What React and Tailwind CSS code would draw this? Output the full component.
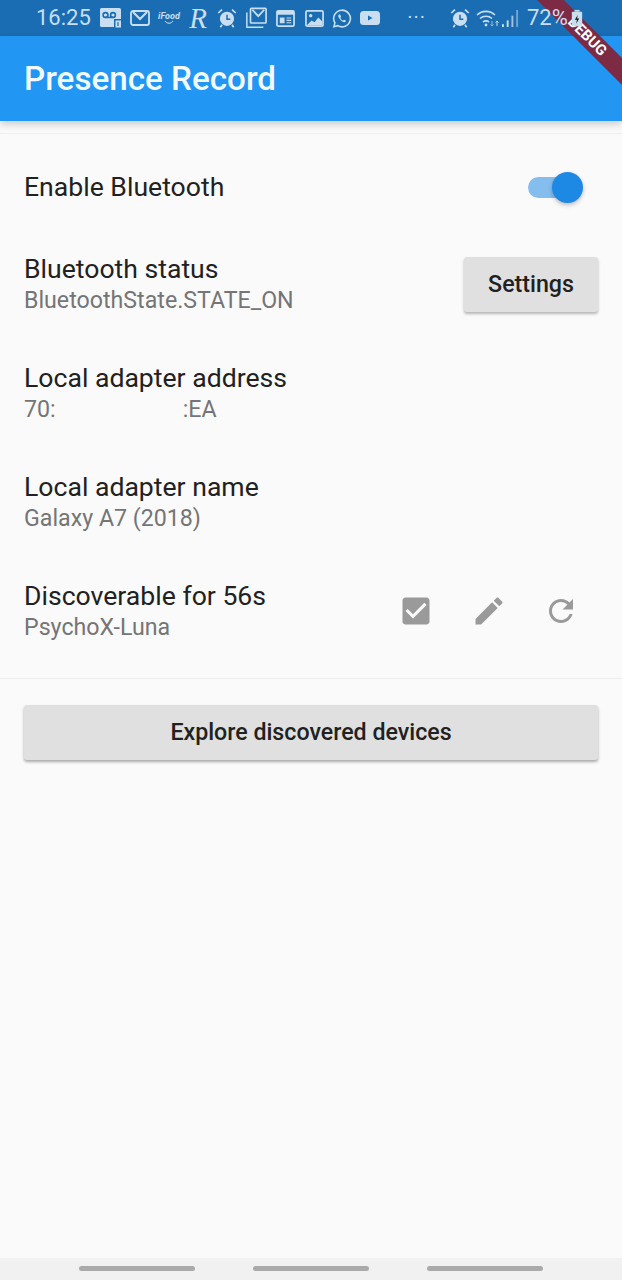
import React from "react";

const Mi = ({ d, className }) => (
    <svg viewBox="0 0 24 24" className={className} fill="currentColor">
        <path d={d} />
    </svg>
);

const Voicemail = () => (
    <svg viewBox="0 0 22 22" className="w-[22px] h-[22px]">
        <rect x="0" y="1" width="21" height="19" rx="1.5" fill="#c9dff1" />
        <circle cx="5.5" cy="8" r="2.4" fill="none" stroke="#1a6db3" strokeWidth="1.6" />
        <circle cx="13" cy="8" r="2.4" fill="none" stroke="#1a6db3" strokeWidth="1.6" />
        <path d="M5.5 10.4h7.5" stroke="#1a6db3" strokeWidth="1.6" />
        <rect x="14" y="12" width="8" height="9" fill="#1a6db3" />
        <rect x="15.5" y="13.5" width="5.5" height="7" fill="#c9dff1" />
        <path d="M18 15v4" stroke="#1a6db3" strokeWidth="1.2" />
    </svg>
);

const Mail = () => (
    <svg viewBox="0 0 20 18" className="w-[20px] h-[18px]">
        <rect x="1" y="2" width="18" height="14" rx="2" fill="none" stroke="#c9dff1" strokeWidth="1.8" />
        <path d="M3 3l7 7 7-7" fill="none" stroke="#c9dff1" strokeWidth="2" />
    </svg>
);

const Alarm = () => (
    <svg viewBox="0 0 24 24" className="w-[20px] h-[20px]">
        <circle cx="12" cy="13" r="8.5" fill="#c9dff1" />
        <path d="M12 8v5.5h4" fill="none" stroke="#1a6db3" strokeWidth="1.8" />
        <path d="M1.5 6L6 2M22.5 6L18 2M6 20l-2 3M18 20l2 3" stroke="#c9dff1" strokeWidth="2" />
    </svg>
);

const MailStack = () => (
    <svg viewBox="0 0 24 24" className="w-[22px] h-[22px]">
        <path d="M2 6v16h18" fill="none" stroke="#c9dff1" strokeWidth="1.6" />
        <rect x="6" y="1.5" width="17" height="16" rx="1" fill="none" stroke="#c9dff1" strokeWidth="1.8" />
        <path d="M8 3l6.5 7L21 3" fill="none" stroke="#c9dff1" strokeWidth="2" />
    </svg>
);

const Calendar = () => (
    <svg viewBox="0 0 20 20" className="w-[19px] h-[19px]">
        <rect x="1" y="2" width="18" height="16" rx="1.5" fill="none" stroke="#c9dff1" strokeWidth="1.8" />
        <rect x="1" y="2" width="18" height="4" fill="#c9dff1" />
        <rect x="4" y="9" width="5" height="6" fill="#c9dff1" />
        <path d="M11 9.5h5M11 12h5M11 14.5h5" stroke="#c9dff1" strokeWidth="1.2" />
    </svg>
);

const ImageIcon = () => (
    <svg viewBox="0 0 20 20" className="w-[19px] h-[19px]">
        <rect x="1" y="2" width="18" height="16" rx="1.5" fill="none" stroke="#c9dff1" strokeWidth="1.8" />
        <circle cx="6" cy="7" r="1.8" fill="#c9dff1" />
        <path d="M2 17l5-5 3 2 4-5 4 4v4z" fill="#c9dff1" />
    </svg>
);

const Whatsapp = () => (
    <svg viewBox="0 0 24 24" className="w-[21px] h-[21px]">
        <path d="M12 2a10 10 0 0 0-8.5 15.2L2.3 21.8l4.7-1.2A10 10 0 1 0 12 2z" fill="none" stroke="#c9dff1" strokeWidth="1.9" />
        <path d="M8.2 7.2c-1 1-1 2.6.6 4.9 1.6 2.3 3.6 3.9 5.6 4.3 1.3.2 2.3-.7 2.5-1.7l-2.4-1.3-1.1 1c-1.4-.5-2.8-2-3.4-3.4l.9-1.1-1.1-2.6z" fill="#c9dff1" />
    </svg>
);

const Youtube = () => (
    <svg viewBox="0 0 20 14" className="w-[20px] h-[14px]">
        <rect width="20" height="14" rx="3.5" fill="#c9dff1" />
        <path d="M8 4.5l4.5 2.5L8 9.5z" fill="#1a6db3" />
    </svg>
);

const Wifi = () => (
    <svg viewBox="0 0 24 20" className="w-[24px] h-[20px]">
        <path d="M1 7a13 13 0 0 1 18 0M4 10.5a9 9 0 0 1 12 0M7 14a5 5 0 0 1 6 0" fill="none" stroke="#c9dff1" strokeWidth="1.6" />
        <circle cx="10" cy="17" r="1.4" fill="#c9dff1" />
        <path d="M16 13v5M14.5 16.5l1.5 1.5 1.5-1.5" fill="none" stroke="#8fbce0" strokeWidth="1" />
        <path d="M21 18v-5M19.5 14.5L21 13l1.5 1.5" fill="none" stroke="#c9dff1" strokeWidth="1" />
    </svg>
);

const Signal = () => (
    <svg viewBox="0 0 18 20" className="w-[17px] h-[19px]">
        <rect x="0" y="16" width="2" height="3" fill="#c9dff1" />
        <rect x="5" y="12" width="2" height="7" fill="#c9dff1" />
        <rect x="10" y="7" width="2" height="12" fill="#c9dff1" opacity="0.75" />
        <rect x="15" y="1" width="2" height="18" fill="#c9dff1" opacity="0.5" />
    </svg>
);

const Battery = () => (
    <svg viewBox="0 0 14 20" className="w-[12px] h-[19px]">
        <rect x="4" y="0" width="6" height="2" fill="#c9dff1" />
        <rect x="1" y="2" width="12" height="17" rx="1" fill="#c9dff1" />
        <path d="M8 6L4.5 11.5H7L6 16l3.5-6H7z" fill="#111" />
    </svg>
);

const StatusBar = () => (
    <div className="h-[36px] bg-[#1a6db3] shrink-0">
        {/* icons sit above the debug ribbon */}
        <div className="relative z-30 h-full flex items-center pl-[36px] text-[#c9dff1]">
            <span className="text-[22px] w-[64px] leading-none">16:25</span>
            <div className="w-[22px] flex justify-center"><Voicemail /></div>
            <div className="w-[36px] flex justify-center"><Mail /></div>
            <div className="w-[22px] flex flex-col items-center">
                <span className="text-[9px] font-bold italic leading-none">iFood</span>
                <svg viewBox="0 0 10 3" className="w-[10px] h-[3px]">
                    <path d="M1 0c2 3 6 3 8 0" fill="none" stroke="#c9dff1" strokeWidth="1" />
                </svg>
            </div>
            <div className="w-[36px] flex justify-center">
                <span className="text-[29px] italic leading-none font-['Liberation_Serif',serif]">R</span>
            </div>
            <div className="w-[22px] flex justify-center"><Alarm /></div>
            <div className="w-[36px] flex justify-center"><MailStack /></div>
            <div className="w-[22px] flex justify-center"><Calendar /></div>
            <div className="w-[36px] flex justify-center"><ImageIcon /></div>
            <div className="w-[20px] flex justify-center"><Whatsapp /></div>
            <div className="w-[36px] flex justify-center"><Youtube /></div>
            <div className="w-[38px] flex justify-end text-[20px] leading-none tracking-[1px] -mt-[2px]">···</div>
            <div className="w-[44px] flex justify-end"><Alarm /></div>
            <div className="ml-[6px] flex items-center"><Wifi /></div>
            <div className="ml-[2px] flex items-center"><Signal /></div>
            <span className="text-[22px] leading-none ml-[8px] whitespace-nowrap">72%</span>
            <div className="ml-[3px] flex items-center"><Battery /></div>
        </div>
    </div>
);

const InfoRow = ({ title, sub, children }) => (
    <div className="h-[109px] flex items-center pl-[24px] pr-[24px]">
        <div className="flex-1 -mt-[2px]">
            <div className="text-[26.6px] leading-[32px] text-[#212121]">{title}</div>
            <div className="text-[23.2px] leading-[30px] text-[#757575]">{sub}</div>
        </div>
        {children}
    </div>
);

export default function App() {
    return (
        <div className="relative w-[622px] h-[1280px] overflow-hidden bg-[#fafafa] flex flex-col font-['Roboto',sans-serif]">
            <StatusBar />

            {/* App bar */}
            <div className="h-[85px] bg-[#2196f3] flex items-center px-[24px] shadow-[0_3px_8px_rgba(0,0,0,0.2)] shrink-0 z-10">
                <h1 className="text-[33.2px] font-medium text-[#f2fbff] leading-none">Presence Record</h1>
            </div>

            <div className="mt-[12px] h-px bg-[#eeeeee]" />

            {/* Enable */}
            <div className="mt-[10px] h-[86px] flex items-center justify-between pl-[24px] pr-[44px]">
                <span className="text-[26.6px] text-[#212121]">Enable Bluetooth</span>
                <div className="relative w-[50px] h-[21px] rounded-full bg-[#86bdef]">
                    <div className="absolute right-[-5px] top-[-5px] w-[31px] h-[31px] rounded-full bg-[#1e88e5] shadow-[0_2px_4px_rgba(0,0,0,0.25)]" />
                </div>
            </div>

            <InfoRow title="Bluetooth status" sub="BluetoothState.STATE_ON">
                <button className="w-[134px] h-[55px] rounded-[3px] bg-[#e0e0e0] text-[23.2px] font-medium text-[#212121] shadow-[0_2px_3px_rgba(0,0,0,0.28)] -mt-[1px]">
                    Settings
                </button>
            </InfoRow>

            <InfoRow
                title="Local adapter address"
                sub={
                    <span className="flex">
                        <span>70:</span>
                        <span className="w-[127px]" />
                        <span>:EA</span>
                    </span>
                }
            />

            <InfoRow title="Local adapter name" sub="Galaxy A7 (2018)" />

            <InfoRow title="Discoverable for 56s" sub="PsychoX-Luna">
                <div className="flex items-center text-[#9a9a9a] mr-[19px] gap-[36.5px] -mt-[2px]">
                    <Mi
                        className="w-[36px] h-[36px]"
                        d="M19 3H5c-1.11 0-2 .9-2 2v14c0 1.1.89 2 2 2h14c1.11 0 2-.9 2-2V5c0-1.1-.89-2-2-2zm-9 14l-5-5 1.41-1.41L10 14.17l7.59-7.59L19 8l-9 9z"
                    />
                    <Mi
                        className="w-[36px] h-[36px]"
                        d="M3 17.25V21h3.75L17.81 9.94l-3.75-3.75L3 17.25zM20.71 7.04c.39-.39.39-1.02 0-1.41l-2.34-2.34c-.39-.39-1.02-.39-1.41 0l-1.83 1.83 3.75 3.75 1.83-1.83z"
                    />
                    <Mi
                        className="w-[36px] h-[36px]"
                        d="M17.65 6.35C16.2 4.9 14.21 4 12 4c-4.42 0-7.99 3.58-7.99 8s3.57 8 7.99 8c3.73 0 6.84-2.55 7.73-6h-2.08c-.82 2.33-3.04 4-5.65 4-3.31 0-6-2.69-6-6s2.69-6 6-6c1.66 0 3.14.69 4.22 1.78L13 11h7V4l-2.35 2.35z"
                    />
                </div>
            </InfoRow>

            <div className="mt-[12px] h-px bg-[#eeeeee]" />

            <div className="px-[24px] mt-[26px]">
                <button className="w-full h-[55px] rounded-[3px] bg-[#e0e0e0] text-[23.2px] font-medium text-[#212121] shadow-[0_2px_3px_rgba(0,0,0,0.32)]">
                    Explore discovered devices
                </button>
            </div>

            <div className="flex-1" />

            {/* Nav bar */}
            <div className="h-[22px] bg-[#f1f1f1] flex items-start justify-center gap-[58px] pt-[8px] shrink-0">
                <div className="w-[116px] h-[5px] rounded-full bg-[#aaaaaa]" />
                <div className="w-[116px] h-[5px] rounded-full bg-[#aaaaaa]" />
                <div className="w-[116px] h-[5px] rounded-full bg-[#aaaaaa]" />
            </div>

            {/* Debug ribbon */}
            <div className="absolute left-[487px] top-[27px] w-[200px] h-[19px] rotate-45 bg-[#7d2b45] flex items-center justify-center z-20">
                <span className="text-[15px] font-bold text-white leading-none">DEBUG</span>
            </div>
        </div>
    );
}
